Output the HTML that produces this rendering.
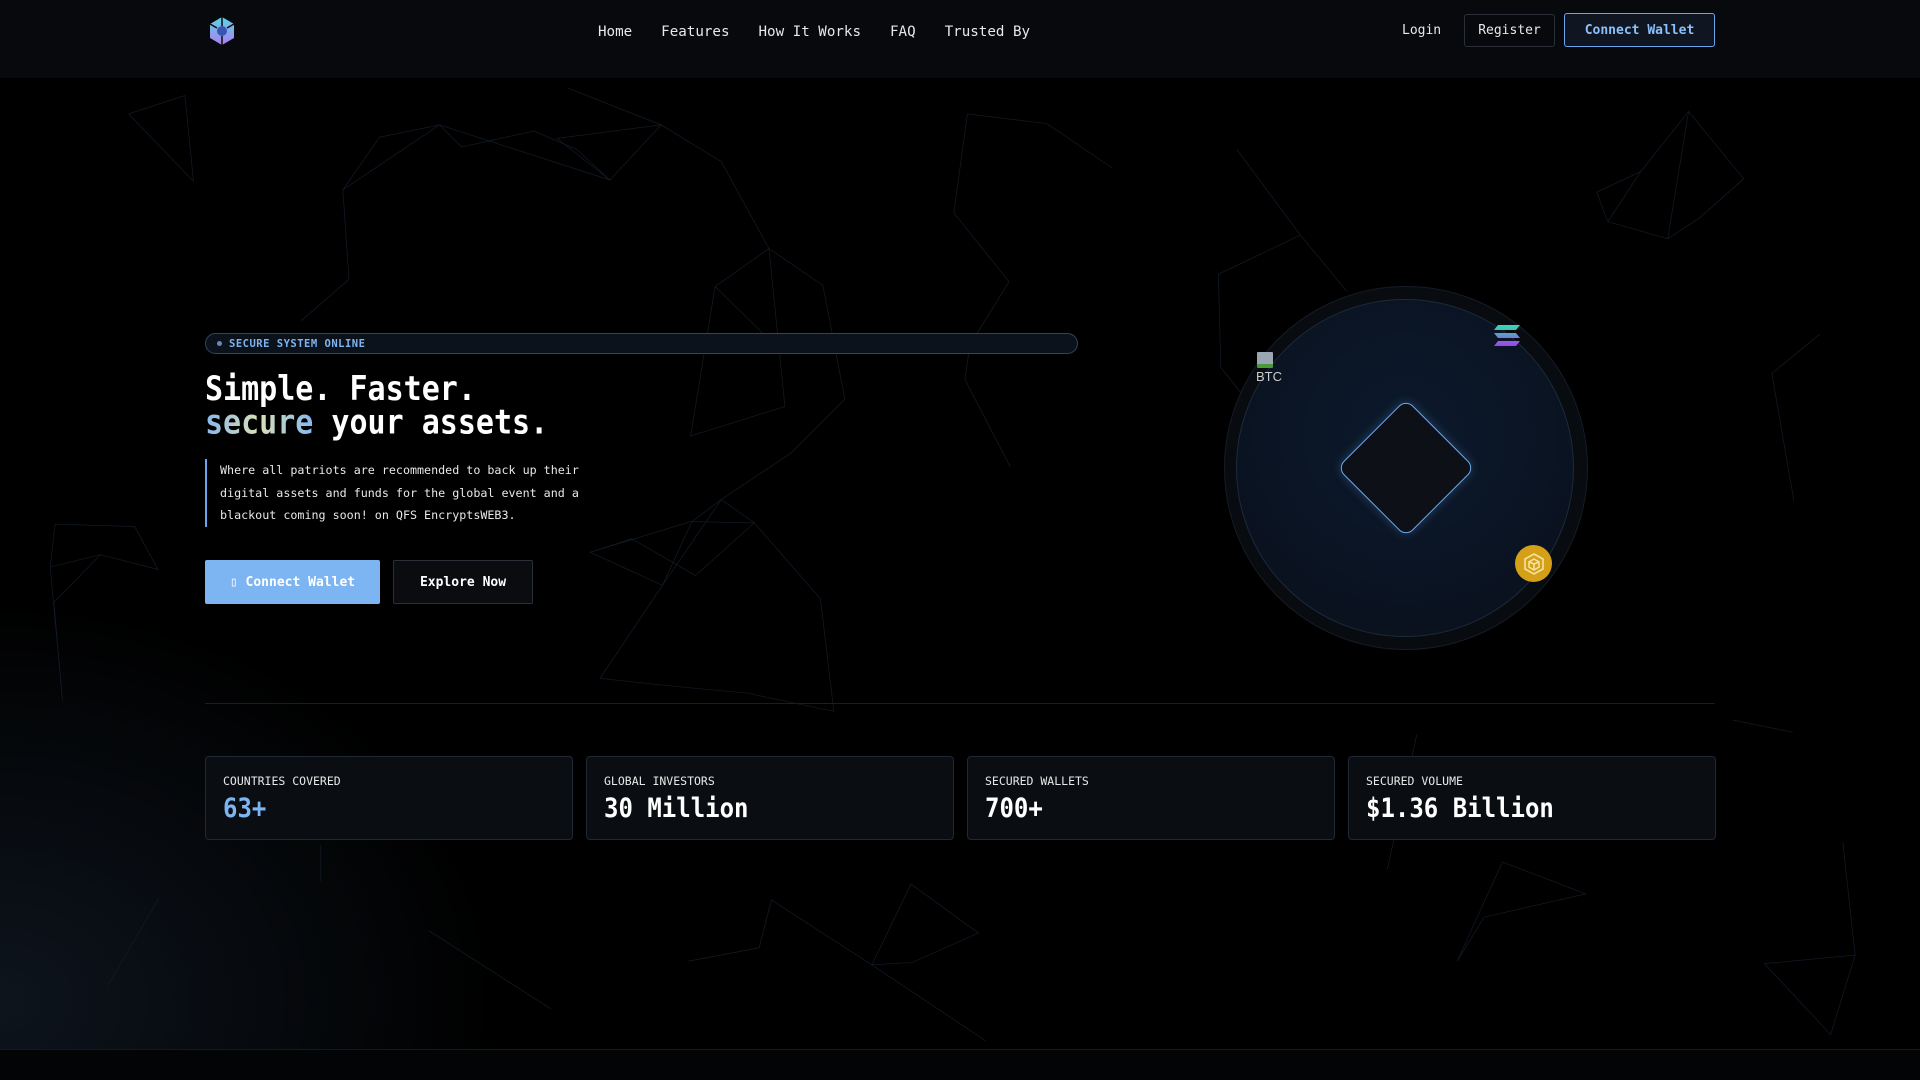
<!DOCTYPE html>
<html><head><meta charset="utf-8"><style>
*{margin:0;padding:0;box-sizing:border-box}
body{width:1920px;height:1080px;background:#000;overflow:hidden;font-family:"DejaVu Sans Mono","Liberation Mono",monospace;color:#fff;position:relative}
.bg{position:absolute;left:0;top:0;width:1920px;height:1080px;background:radial-gradient(ellipse 500px 400px at 0 1000px,rgba(30,45,65,.45),transparent),#000}
svg.net{position:absolute;left:0;top:0}
nav{position:absolute;left:0;top:0;width:1920px;height:78px;background:#07090d}
.links{position:absolute;top:24px;left:598px;font-size:14.2px;color:#e8e8e8;display:flex;gap:29px}
.login{position:absolute;left:1402px;top:23px;font-size:13px;color:#e8e8e8}
.reg{position:absolute;left:1464px;top:14px;width:91px;height:33px;border:1px solid #2a2f38;border-radius:3px;font-size:13px;display:flex;align-items:center;justify-content:center;color:#e8e8e8}
.cw{position:absolute;left:1564px;top:13px;width:151px;height:34px;border:1px solid #6aa6ee;border-radius:3px;background:#0f1622;font-size:13px;display:flex;align-items:center;justify-content:center;color:#8cc0f8;font-weight:bold}
.badge{position:absolute;left:205px;top:333px;width:873px;height:21px;border:1px solid #2f4560;border-radius:11px;background:#0b121c;font-size:10.5px;color:#7fb3ee;font-weight:bold;padding-left:23px;line-height:20px;letter-spacing:.5px}
.badge:before{content:"";position:absolute;left:11px;top:7px;width:5px;height:5px;border-radius:50%;background:#6b89b0}
h1{position:absolute;left:205px;top:373px;font-size:30px;line-height:29.5px;font-weight:bold;transform:scaleY(1.12);transform-origin:0 0}
.g{background:linear-gradient(90deg,#88b8ee,#d8e0b8 50%,#88b8ee);-webkit-background-clip:text;color:transparent}
.p{position:absolute;left:205px;top:459px;border-left:2px solid #6aa6ee;padding-left:13px;font-size:11.7px;line-height:22.5px;color:#e8e8e8;width:420px}
.b1{position:absolute;left:205px;top:560px;width:175px;height:44px;background:#7db5f3;border-radius:2px;color:#fff;font-size:13px;font-weight:bold;display:flex;align-items:center;justify-content:center}
.b2{position:absolute;left:393px;top:560px;width:140px;height:44px;border:1px solid #2a2f38;background:#0a0c10;border-radius:2px;color:#fff;font-size:13px;font-weight:bold;display:flex;align-items:center;justify-content:center}
.outer{position:absolute;left:1224px;top:286px;width:364px;height:364px;border-radius:50%;background:#080b10;border:1px solid #151c26}
.inner{position:absolute;left:1236px;top:299px;width:338px;height:338px;border-radius:50%;background:radial-gradient(circle at 50% 40%,#0c1a2c,#0a1220 70%,#0b1018);border:1px solid #1c2a3a}
.dia{position:absolute;left:1357px;top:419px;width:98px;height:98px;transform:rotate(45deg);border:1.5px solid #6aa6ee;border-radius:10px;background:#0d1016;box-shadow:0 0 10px rgba(100,160,240,.3)}
.line{position:absolute;left:205px;top:703px;width:1510px;height:1px;background:#1a1d22}
.card{position:absolute;top:756px;width:368px;height:84px;border:1px solid #1f2835;border-radius:4px;background:#0a0d12;padding:17px 0 0 17px}
.card .l{font-size:11.5px;color:#e8e8e8}
.card .v{font-size:24px;font-weight:bold;margin-top:5px;transform:scaleY(1.1);transform-origin:0 0}
.foot{position:absolute;left:0;top:1049px;width:1920px;height:31px;background:#030405;border-top:1px solid #15181d}
</style></head><body>
<div class="bg"></div>
<svg class="net" width="1920" height="1080" viewBox="0 0 1568 882" fill="none" stroke="#121b27" stroke-width="0.6">
<polyline points="105,93 151,78 158,148 105,93"/>
<polyline points="280,155 310,112 359,102 377,120 436,107 471,122 498,147 540,102 589,132 628,203 672,233 690,326 646,370 589,408 565,426 541,478 490,554 556,561 610,566 681,581"/>
<polyline points="464,72 540,102 455,113 498,147 359,102 280,155 285,228 246,262"/>
<polyline points="584,234 628,203 641,332 564,356 584,234 635,284 561,284"/>
<polyline points="482,451 564,426 616,427 589,408 541,478 482,451 516,440 568,470 616,427 670,489 681,581"/>
<polyline points="790,93 855,101 908,137"/>
<polyline points="790,93 779,174 824,230 792,282 788,310 825,381"/>
<polyline points="1010,122 1062,192 995,224 997,300 1026,337"/>
<polyline points="1062,192 1100,238"/>
<polyline points="1379,91 1340,140 1304,157 1313,181 1362,195 1388,178 1424,146 1379,91 1362,195"/>
<polyline points="1340,140 1313,181"/>
<polyline points="1486,273 1447,305 1465,409"/>
<polyline points="45,428 110,430 129,465 82,453 41,463 45,428"/>
<polyline points="41,463 51,572 44,492 82,453"/>
<polyline points="1157,600 1133,710"/>
<polyline points="1227,704 1295,730 1212,749 1190,785 1227,704"/>
<polyline points="562,785 620,774 630,735 712,788 744,722 799,762 745,786 712,788 805,850"/>
<polyline points="1415,588 1464,598"/>
<polyline points="1505,688 1515,780 1441,787 1495,845 1515,780"/>
<polyline points="88,805 130,733"/>
<polyline points="450,824 350,760"/>
<polyline points="262,720 262,690"/>
</svg>
<nav>
<svg style="position:absolute;left:208px;top:16px" width="28" height="30" viewBox="0 0 28 30"><defs><linearGradient id="lg" x1="0" y1="0" x2="0" y2="1"><stop offset="0" stop-color="#5ad6e6"/><stop offset="1" stop-color="#b07cf0"/></linearGradient></defs><polygon points="14,1 26,8 26,22 14,29 2,22 2,8" fill="url(#lg)"/><circle cx="14" cy="15" r="5" fill="#3a55b0"/><path d="M14 1v9M2 8l7 4M26 8l-7 4M14 20v9" stroke="#0a0d12" stroke-width="1.5"/></svg>
<div class="links"><span>Home</span><span>Features</span><span>How It Works</span><span>FAQ</span><span>Trusted By</span></div>
<div class="login">Login</div>
<div class="reg">Register</div>
<div class="cw">Connect Wallet</div>
</nav>
<div class="badge">SECURE SYSTEM ONLINE</div>
<h1>Simple. Faster.<br><span class="g">secure</span> your assets.</h1>
<div class="p">Where all patriots are recommended to back up their digital assets and funds for the global event and a blackout coming soon! on QFS EncryptsWEB3.</div>
<div class="b1">▯ Connect Wallet</div>
<div class="b2">Explore Now</div>
<div class="outer"></div>
<div class="inner"></div>
<div class="dia"></div>
<div style="position:absolute;left:1257px;top:352px;width:16px;height:16px;background:#9aa6b4;border-radius:1px;border-bottom:4px solid #4a9a3a"></div>
<div style="position:absolute;left:1256px;top:369px;font-family:'Liberation Sans',sans-serif;font-size:13px;color:#ccc">BTC</div>
<svg style="position:absolute;left:1494px;top:325px" width="26" height="22" viewBox="0 0 26 22"><defs><linearGradient id="sg" x1="0" y1="0" x2="0" y2="1"><stop offset="0" stop-color="#2fe0b0"/><stop offset="1" stop-color="#a040f0"/></linearGradient></defs><path d="M4 0h22l-4 5H0zM0 8h22l4 5H4zM4 16h22l-4 5H0z" fill="url(#sg)"/></svg>
<div style="position:absolute;left:1515px;top:545px;width:37px;height:37px;border-radius:50%;background:#d4a017;display:flex;align-items:center;justify-content:center"><svg width="24" height="24" viewBox="0 0 24 24" fill="none" stroke="#f6e2a0" stroke-width="1.6"><path d="M12 2l9 5v10l-9 5-9-5V7z"/><path d="M12 7l5 3v5l-5 3-5-3v-5z"/><path d="M12 12v6M7 10l5 2 5-2"/></svg></div>
<div class="line"></div>
<div class="card" style="left:205px"><div class="l">COUNTRIES COVERED</div><div class="v" style="color:#7db5f3">63+</div></div>
<div class="card" style="left:586px"><div class="l">GLOBAL INVESTORS</div><div class="v">30 Million</div></div>
<div class="card" style="left:967px"><div class="l">SECURED WALLETS</div><div class="v">700+</div></div>
<div class="card" style="left:1348px"><div class="l">SECURED VOLUME</div><div class="v">$1.36 Billion</div></div>
<div class="foot"></div>
</body></html>
